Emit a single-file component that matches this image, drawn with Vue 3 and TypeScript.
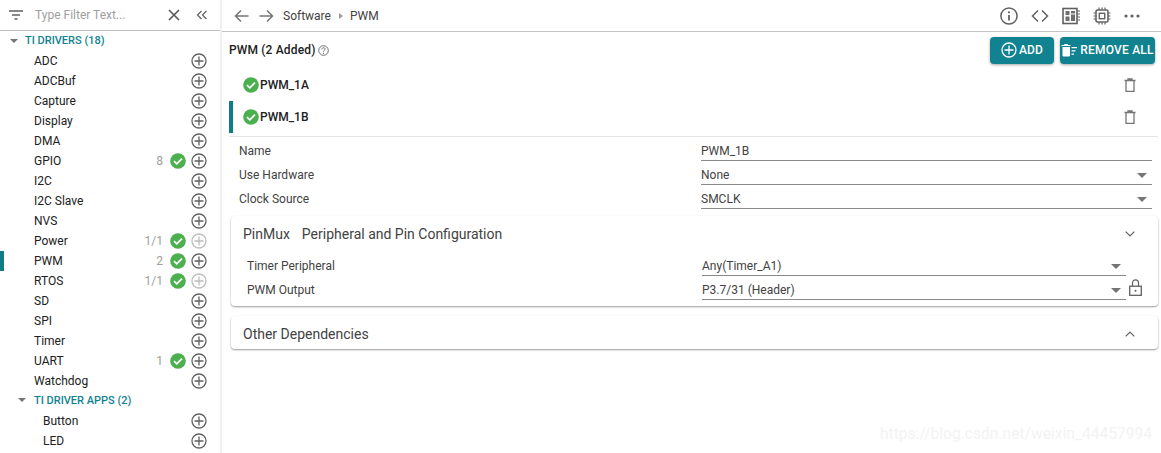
<script setup lang="ts">
interface ModuleRow {
  name: string
  count?: string
  ok?: boolean
  disabled?: boolean
  current?: boolean
}

const drivers: ModuleRow[] = [
  { name: 'ADC' },
  { name: 'ADCBuf' },
  { name: 'Capture' },
  { name: 'Display' },
  { name: 'DMA' },
  { name: 'GPIO', count: '8', ok: true },
  { name: 'I2C' },
  { name: 'I2C Slave' },
  { name: 'NVS' },
  { name: 'Power', count: '1/1', ok: true, disabled: true },
  { name: 'PWM', count: '2', ok: true, current: true },
  { name: 'RTOS', count: '1/1', ok: true, disabled: true },
  { name: 'SD' },
  { name: 'SPI' },
  { name: 'Timer' },
  { name: 'UART', count: '1', ok: true },
  { name: 'Watchdog' },
]

const apps: ModuleRow[] = [{ name: 'Button' }, { name: 'LED' }]

const instances = [
  { name: 'PWM_1A', active: false },
  { name: 'PWM_1B', active: true },
]
</script>

<template>
  <div class="app">
    <aside class="sidebar">
      <div class="filter">
        <svg class="filter-icon" width="16" height="12" viewBox="0 0 16 12">
          <path d="M1 2h14M4 6h8M6.500 10h3" stroke="#616161" stroke-width="1.400" fill="none" />
        </svg>
        <span class="filter-text">Type Filter Text...</span>
        <svg class="filter-clear" width="14" height="14" viewBox="0 0 14 14">
          <path d="M2 2l10 10M12 2L2 12" stroke="#555" stroke-width="1.600" fill="none" />
        </svg>
        <svg class="filter-collapse" width="12" height="10" viewBox="0 0 12 10">
          <path d="M5.500 1L1.500 5l4 4M10.500 1l-4 4 4 4" stroke="#666" stroke-width="1.300" fill="none" />
        </svg>
      </div>

      <div class="group">
        <span class="caret"></span>
        <span>TI DRIVERS (18)</span>
      </div>
      <div v-for="m in drivers" :key="m.name" class="row">
        <span v-if="m.current" class="row-mark"></span>
        <span class="row-name">{{ m.name }}</span>
        <span v-if="m.count" class="row-count">{{ m.count }}</span>
        <svg v-if="m.ok" class="row-ok" width="16" height="16" viewBox="0 0 16 16">
          <circle cx="8" cy="8" r="7.800" fill="#4caf50" />
          <path d="M4 8.200l2.800 2.600 5.200-5.200" stroke="#fff" stroke-width="1.700" fill="none" />
        </svg>
        <svg class="row-add" :class="{ off: m.disabled }" width="16" height="16" viewBox="0 0 16 16">
          <circle cx="8" cy="8" r="7" stroke="currentColor" stroke-width="1.300" fill="none" />
          <path d="M8 3.500v9M3.500 8h9" stroke="currentColor" stroke-width="1.300" fill="none" />
        </svg>
      </div>

      <div class="group group-sub">
        <span class="caret"></span>
        <span>TI DRIVER APPS (2)</span>
      </div>
      <div v-for="m in apps" :key="m.name" class="row row-sub">
        <span class="row-name">{{ m.name }}</span>
        <svg class="row-add" width="16" height="16" viewBox="0 0 16 16">
          <circle cx="8" cy="8" r="7" stroke="currentColor" stroke-width="1.300" fill="none" />
          <path d="M8 3.500v9M3.500 8h9" stroke="currentColor" stroke-width="1.300" fill="none" />
        </svg>
      </div>
    </aside>

    <main class="main">
      <header class="toolbar">
        <svg width="16" height="14" viewBox="0 0 16 14">
          <path d="M14.500 7H2M7 1.500L1.500 7 7 12.500" stroke="#757575" stroke-width="1.500" fill="none" />
        </svg>
        <svg class="nav-next" width="16" height="14" viewBox="0 0 16 14">
          <path d="M1.500 7H14M9 1.500L14.500 7 9 12.500" stroke="#757575" stroke-width="1.500" fill="none" />
        </svg>
        <span class="crumb">Software</span>
        <span class="crumb-sep"></span>
        <span class="crumb">PWM</span>
        <div class="tools">
          <svg width="18" height="18" viewBox="0 0 18 18">
            <circle cx="9" cy="9" r="8.100" stroke="#616161" stroke-width="1.500" fill="none" />
            <path d="M9 8v5.500" stroke="#616161" stroke-width="1.800" />
            <circle cx="9" cy="5.300" r="1.100" fill="#616161" />
          </svg>
          <svg width="18" height="14" viewBox="0 0 18 14">
            <path d="M7 1.500L1.500 7 7 12.500M11 1.500L16.500 7 11 12.500" stroke="#616161" stroke-width="1.500" fill="none" />
          </svg>
          <svg width="18" height="18" viewBox="0 0 18 18">
            <rect x="1" y="1.500" width="14" height="15" stroke="#616161" stroke-width="1.600" fill="none" />
            <path d="M3.500 4h4v4h-4zM9 4h4v2.500H9zM3.500 9.500h4V14h-4zM9 7.500h4V14H9z" fill="#6e6e6e" />
            <path d="M15.500 4h2.500M15.500 7h2.500M15.500 10h2.500M15.500 13h2.500" stroke="#616161" stroke-width="1.100" />
          </svg>
          <svg width="18" height="18" viewBox="0 0 18 18">
            <rect x="3" y="3" width="12" height="12" rx="1.500" stroke="#616161" stroke-width="1.600" fill="none" />
            <rect x="6.300" y="6.300" width="5.400" height="5.400" stroke="#616161" stroke-width="1.400" fill="none" />
            <path d="M6 0.500v2M9 0.500v2M12 0.500v2M6 15.500v2M9 15.500v2M12 15.500v2M0.500 6h2M0.500 9h2M0.500 12h2M15.500 6h2M15.500 9h2M15.500 12h2" stroke="#616161" stroke-width="1.200" />
          </svg>
          <svg width="16" height="4" viewBox="0 0 16 4">
            <circle cx="2" cy="2" r="1.600" fill="#616161" />
            <circle cx="8" cy="2" r="1.600" fill="#616161" />
            <circle cx="14" cy="2" r="1.600" fill="#616161" />
          </svg>
        </div>
      </header>

      <section class="content">
        <div class="title-row">
          <span class="title">PWM (2 Added)</span>
          <svg class="help" width="11" height="11" viewBox="0 0 11 11">
            <circle cx="5.500" cy="5.500" r="4.800" stroke="#616161" stroke-width="0.900" fill="none" />
            <path d="M3.900 4.300c0-2.100 3.200-2.100 3.200-0.100 0 1.200-1.600 1.200-1.600 2.500" stroke="#616161" stroke-width="0.900" fill="none" />
            <circle cx="5.500" cy="8.200" r="0.600" fill="#616161" />
          </svg>
          <button class="btn btn-add">
            <svg width="16" height="16" viewBox="0 0 16 16">
              <circle cx="8" cy="8" r="7" stroke="#fff" stroke-width="1.300" fill="none" />
              <path d="M8 3.500v9M3.500 8h9" stroke="#fff" stroke-width="1.300" fill="none" />
            </svg>
            ADD
          </button>
          <button class="btn btn-remove">
            <svg width="16" height="13" viewBox="0 0 16 13">
              <path d="M1.500 3h7.500v8.500a1 1 0 0 1-1 1H2.500a1 1 0 0 1-1-1zM0.500 1h2.500l0.500-1h3l0.500 1h2.500v1H0.500z" fill="#fff" />
              <path d="M10.500 3H16v1.300h-5.500zM10.500 6.200h4v1.300h-4zM10.500 9.400h2.500v1.300h-2.500z" fill="#fff" />
            </svg>
            REMOVE ALL
          </button>
        </div>

        <div class="instances">
          <div v-for="item in instances" :key="item.name" class="instance" :class="{ active: item.active }">
            <svg width="16" height="16" viewBox="0 0 16 16">
              <circle cx="8" cy="8" r="7.800" fill="#4caf50" />
              <path d="M4 8.200l2.800 2.600 5.200-5.200" stroke="#fff" stroke-width="1.700" fill="none" />
            </svg>
            <span class="instance-name">{{ item.name }}</span>
            <svg class="trash" width="12" height="14" viewBox="0 0 12 14">
              <path d="M0.500 2.500h11M4 2.500V1h4v1.500M2 2.500v10.800h8V2.500" stroke="#757575" stroke-width="1.300" fill="none" />
            </svg>
          </div>
        </div>

        <div class="form">
          <div class="field">
            <span class="field-label">Name</span>
            <div class="field-input">PWM_1B</div>
          </div>
          <div class="field">
            <span class="field-label">Use Hardware</span>
            <div class="field-input select">None</div>
          </div>
          <div class="field">
            <span class="field-label">Clock Source</span>
            <div class="field-input select">SMCLK</div>
          </div>
        </div>

        <div class="card">
          <div class="card-head card-head-open">
            <span class="card-title"><span class="card-prefix">PinMux</span>Peripheral and Pin Configuration</span>
            <svg width="10" height="6" viewBox="0 0 10 6">
              <path d="M0.700 0.700L5 5l4.300-4.300" stroke="#616161" stroke-width="1.200" fill="none" />
            </svg>
          </div>
          <div class="card-body">
            <div class="field field-inner">
              <span class="field-label">Timer Peripheral</span>
              <div class="field-input select">Any(Timer_A1)</div>
              <span class="lock-slot"></span>
            </div>
            <div class="field field-inner">
              <span class="field-label">PWM Output</span>
              <div class="field-input select">P3.7/31 (Header)</div>
              <span class="lock-slot">
                <svg width="13" height="17" viewBox="0 0 13 17">
                  <path d="M3.500 7.500V3.800a3 3 0 0 1 6 0v3.700" stroke="#616161" stroke-width="1.200" fill="none" />
                  <rect x="0.700" y="7.200" width="11.600" height="9.100" stroke="#616161" stroke-width="1.300" fill="none" />
                  <circle cx="6.500" cy="11.800" r="1" fill="#616161" />
                </svg>
              </span>
            </div>
          </div>
        </div>

        <div class="card card-closed">
          <div class="card-head">
            <span class="card-title">Other Dependencies</span>
            <svg width="10" height="6" viewBox="0 0 10 6">
              <path d="M0.700 5.300L5 1l4.300 4.300" stroke="#616161" stroke-width="1.200" fill="none" />
            </svg>
          </div>
        </div>
      </section>
    </main>

    <span class="watermark">https://blog.csdn.net/weixin_44457994</span>
  </div>
</template>

<style>
html,
body {
  margin: 0;
  background: #fff;
}
</style>

<style scoped>
.app {
  position: relative;
  display: flex;
  width: 1161px;
  height: 453px;
  overflow: hidden;
  background: #fff;
  color: #212121;
  font-family: Roboto, "Liberation Sans", sans-serif;
  font-size: 12px;
}

.sidebar {
  flex: none;
  width: 220px;
  border-right: 2px solid #f0f0f0;
}
.filter {
  display: flex;
  align-items: center;
  height: 30px;
  border-bottom: 1px solid #bdbdbd;
}
.filter-icon { margin-left: 8px; }
.filter-text { margin-left: 11px; color: #9e9e9e; }
.filter-clear { margin-left: auto; }
.filter-collapse { margin: 0 12px 0 15px; }

.group {
  display: flex;
  align-items: center;
  box-sizing: border-box;
  height: 20px;
  padding-left: 10px;
  padding-bottom: 1px;
  color: #11828f;
  font-weight: 500;
  font-size: 11px;
}
.group .caret { margin-right: 7px; }
.group-sub { padding-left: 18px; padding-bottom: 2px; }
.group-sub .caret { margin-right: 8px; }
.caret {
  width: 0;
  height: 0;
  border-left: 4px solid transparent;
  border-right: 4px solid transparent;
  border-top: 4px solid #757575;
}

.row {
  position: relative;
  display: flex;
  align-items: center;
  height: 20px;
  padding: 0 13px 0 34px;
}
.row-sub { padding-left: 43px; }
.row-mark {
  position: absolute;
  left: 0;
  top: 0;
  width: 4px;
  height: 20px;
  background: #0f7c88;
}
.row-name { flex: 1; }
.row-count { color: #9e9e9e; margin-right: 7px; }
.row-ok { margin-right: 5px; }
.row-add { color: #616161; }
.row-add.off { color: #bdbdbd; }

.main {
  flex: 1;
  min-width: 0;
}
.toolbar {
  display: flex;
  align-items: center;
  height: 31px;
  padding: 0 21px 0 12px;
  border-bottom: 1px solid #c4c4c4;
}
.nav-next { margin-left: 8px; }
.crumb { color: #424242; }
.nav-next + .crumb { margin-left: 9px; }
.crumb-sep {
  width: 0;
  height: 0;
  margin: 0 7px 0 8px;
  border-top: 3px solid transparent;
  border-bottom: 3px solid transparent;
  border-left: 4px solid #9e9e9e;
}
.tools {
  display: flex;
  align-items: center;
  gap: 13px;
  margin-left: auto;
}

.content {
  padding: 0 3px 0 7px;
}
.title-row {
  display: flex;
  align-items: center;
  height: 32px;
  padding-top: 4px;
  box-sizing: border-box;
}
.title { font-weight: 500; letter-spacing: 0.15px; }
.help { margin-left: 3px; }
.btn {
  display: flex;
  align-items: center;
  justify-content: center;
  height: 27px;
  border: 0;
  border-radius: 4px;
  background: #11828f;
  color: #fff;
  font-family: inherit;
  font-size: 12px;
  font-weight: 500;
  letter-spacing: 0.2px;
  padding: 0;
  box-shadow: 0 1px 3px rgba(0, 0, 0, 0.35);
}
.btn-add { width: 64px; margin-left: auto; gap: 2px; }
.btn-remove { width: 95px; margin: 0 3px 0 6px; gap: 3px; }

.instances {
  padding-top: 5px;
  padding-bottom: 3px;
  border-bottom: 1px solid #e4e4e4;
}
.instance {
  display: flex;
  align-items: center;
  height: 32px;
  padding: 0 22px 0 10px;
  border-left: 4px solid transparent;
}
.instance.active { border-left-color: #0f7c88; }
.instance-name { margin-left: 1px; font-weight: 500; }
.trash { margin-left: auto; }

.form { padding: 2px 6px 0 10px; }
.field {
  display: flex;
  align-items: center;
  height: 24px;
}
.field-label {
  flex: none;
  width: 462px;
  color: #424242;
}
.field-input {
  position: relative;
  flex: 1;
  height: 20px;
  line-height: 20px;
  box-sizing: border-box;
  border-bottom: 1px solid #8a8a8a;
  color: #424242;
}
.select::after {
  content: "";
  position: absolute;
  right: 5px;
  top: 8px;
  border-left: 5px solid transparent;
  border-right: 5px solid transparent;
  border-top: 5px solid #757575;
}

.card {
  margin-top: 5px;
  margin-left: 2px;
  border-radius: 4px;
  box-shadow: 0 1px 2px rgba(0, 0, 0, 0.4);
}
.card-head {
  display: flex;
  align-items: center;
  justify-content: space-between;
  height: 37px;
  padding: 0 23px 0 12px;
}
.card-head-open {
  box-sizing: border-box;
  padding-bottom: 2px;
}
.card-title {
  font-size: 14px;
  color: #424242;
}
.card-prefix { margin-right: 12px; }
.card-body { padding: 1px 12px 4px 16px; }
.field-inner .field-label { width: 455px; }
.lock-slot {
  display: flex;
  flex: none;
  box-sizing: border-box;
  width: 20px;
  padding-left: 3px;
  margin-top: -5px;
}
.card-closed {
  margin-top: 10px;
}
.card-closed .card-head { height: 33px; padding-top: 3px; box-sizing: border-box; }

.watermark {
  position: absolute;
  left: 880px;
  top: 425px;
  color: #f3f3f3;
  font-size: 15.600px;
}
</style>
